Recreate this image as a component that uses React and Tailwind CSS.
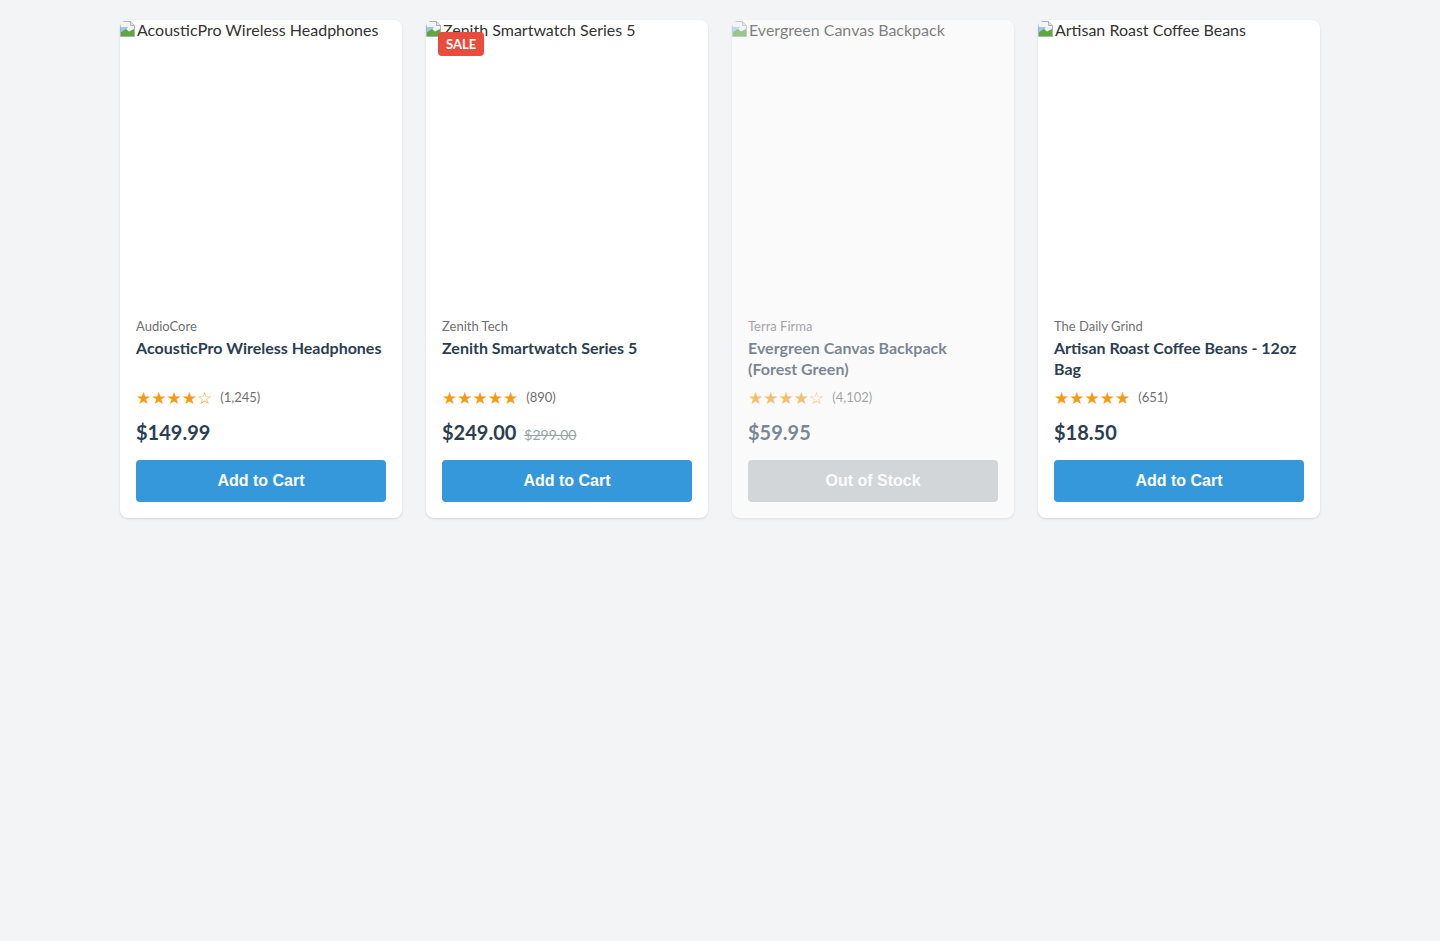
import React from "react";

const products = [
  {
    id: 1,
    alt: "AcousticPro Wireless Headphones",
    brand: "AudioCore",
    name: "AcousticPro Wireless Headphones",
    stars: "★★★★☆",
    reviews: "(1,245)",
    price: "$149.99",
    inStock: true
  },
  {
    id: 2,
    alt: "Zenith Smartwatch Series 5",
    brand: "Zenith Tech",
    name: "Zenith Smartwatch Series 5",
    stars: "★★★★★",
    reviews: "(890)",
    price: "$249.00",
    oldPrice: "$299.00",
    sale: true,
    inStock: true
  },
  {
    id: 3,
    alt: "Evergreen Canvas Backpack",
    brand: "Terra Firma",
    name: "Evergreen Canvas Backpack (Forest Green)",
    stars: "★★★★☆",
    reviews: "(4,102)",
    price: "$59.95",
    inStock: false
  },
  {
    id: 4,
    alt: "Artisan Roast Coffee Beans",
    brand: "The Daily Grind",
    name: "Artisan Roast Coffee Beans - 12oz Bag",
    stars: "★★★★★",
    reviews: "(651)",
    price: "$18.50",
    inStock: true
  }
];

function BrokenImage() {
  return (
    <svg width="16" height="16" viewBox="0 0 16 16" className="mt-[1px] shrink-0">
      <path d="M0.5 0.5h10l4 4v11h-14z" fill="#f1f3f5" stroke="#a9b1ba" />
      <path d="M10.5 0.5v4h4" fill="#dfe3e7" stroke="#a9b1ba" />
      <path d="M1 6h7l-2 3-5 2z" fill="#9cc7ef" />
      <path d="M1 11l5-3 3 2.5 5-2.5v7H1z" fill="#5ea83f" />
    </svg>
  );
}

function ProductCard({ product }) {
  return (
    <div
      className={
        product.inStock
          ? "flex flex-col overflow-hidden rounded-lg bg-white shadow-sm"
          : "flex flex-col overflow-hidden rounded-lg bg-white opacity-60 shadow-sm"
      }
    >
      <div className="relative aspect-square w-full">
        <div className="flex items-start text-[16px] leading-[20px] text-[#333]">
          <BrokenImage />
          <span className="ml-[1px]">{product.alt}</span>
        </div>
        {product.sale && (
          <span className="absolute left-3 top-3 rounded bg-[#e74c3c] px-2 py-[3px] text-[13px] font-bold leading-[18px] text-white">
            SALE
          </span>
        )}
      </div>
      <div className="flex flex-col px-4 pb-4 pt-[15px]">
        <p className="text-[13px] leading-[18px] text-[#707070]">{product.brand}</p>
        <h3 className="mt-[2px] min-h-[42px] text-[16px] font-bold leading-[21px] text-[#2c3e50]">
          {product.name}
        </h3>
        <div className="mt-[9px] flex h-5 items-center">
          <span className="font-['DejaVu_Sans',sans-serif] text-[17px] leading-5 text-[#f39c12]">
            {product.stars}
          </span>
          <span className="ml-2 text-[13px] text-[#707070]">{product.reviews}</span>
        </div>
        <div className="mt-3 flex h-6 items-baseline gap-2">
          <span className="text-[20px] font-bold leading-6 text-[#2c3e50]">{product.price}</span>
          {product.oldPrice && (
            <span className="text-[14px] leading-6 text-[#95a5a6] line-through">{product.oldPrice}</span>
          )}
        </div>
        <button
          type="button"
          disabled={!product.inStock}
          className={
            product.inStock
              ? "mt-4 h-[42px] w-full rounded bg-[#3498db] font-['Liberation_Sans',Arial,sans-serif] text-[16px] font-bold text-white"
              : "mt-4 h-[42px] w-full rounded bg-[#bdc3c7] font-['Liberation_Sans',Arial,sans-serif] text-[16px] font-bold text-white"
          }
        >
          {product.inStock ? "Add to Cart" : "Out of Stock"}
        </button>
      </div>
    </div>
  );
}

export default function App() {
  return (
    <div className="min-h-screen bg-[#f3f4f6] pt-5 font-['Lato','Open_Sans',sans-serif]">
      <div className="mx-auto grid w-[1200px] grid-cols-4 items-start gap-6">
        {products.map((product) => (
          <ProductCard key={product.id} product={product} />
        ))}
      </div>
    </div>
  );
}
